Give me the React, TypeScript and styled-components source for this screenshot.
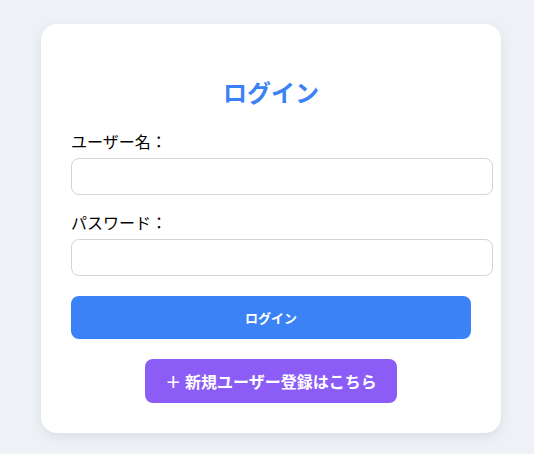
import styled, { createGlobalStyle } from 'styled-components';

const GlobalStyle = createGlobalStyle`
  body {
    margin: 0;
    background: #eef1f5;
    font-family: "Noto Sans CJK JP", "Noto Sans", sans-serif;
  }
`;

const Page = styled.div`
  display: flex;
  justify-content: center;
  align-items: flex-start;
  padding: 24px 0 0 8px;
  min-height: 454px;
  box-sizing: border-box;
`;

const Card = styled.div`
  width: 400px;
  padding: 30px;
  background: #ffffff;
  border-radius: 16px;
  box-shadow: 0 4px 12px rgba(0, 0, 0, 0.08);
  display: flex;
  flex-direction: column;
  align-items: flex-start;
`;

const Title = styled.h2`
  align-self: stretch;
  text-align: center;
  color: #3b82f6;
  font-size: 24px;
  font-weight: 700;
  margin: 22px 0 22px;
  line-height: 32px;
`;

const Group = styled.div`
  margin-bottom: 16px;
`;

const Label = styled.label`
  display: block;
  font-size: 16px;
  line-height: 22px;
  color: #000;
  margin-bottom: 6px;
`;

const Input = styled.input`
  display: block;
  box-sizing: border-box;
  width: 422px;
  height: 37px;
  padding: 10px;
  border: 1px solid #d1d5db;
  border-radius: 8px;
  font-size: 13px;
  outline: none;
`;

const Button = styled.button<{ $variant: 'primary' | 'secondary' }>`
  border: none;
  border-radius: 8px;
  color: #ffffff;
  font-family: inherit;
  font-weight: 700;
  cursor: pointer;
  ${({ $variant }) =>
    $variant === 'primary'
      ? `
    width: 400px;
    height: 43px;
    margin-top: 4px;
    background: #3b82f6;
    font-size: 13px;
  `
      : `
    align-self: center;
    margin-top: 20px;
    height: 44px;
    padding: 0 20px;
    background: #8b5cf6;
    font-size: 16px;
  `}
`;

export default function App() {
  return (
    <>
      <GlobalStyle />
      <Page>
        <Card>
          <Title>ログイン</Title>
          <Group>
            <Label>ユーザー名：</Label>
            <Input type='text' />
          </Group>
          <Group>
            <Label>パスワード：</Label>
            <Input type='password' />
          </Group>
          <Button $variant='primary'>ログイン</Button>
          <Button $variant='secondary'>＋ 新規ユーザー登録はこちら</Button>
        </Card>
      </Page>
    </>
  );
}
